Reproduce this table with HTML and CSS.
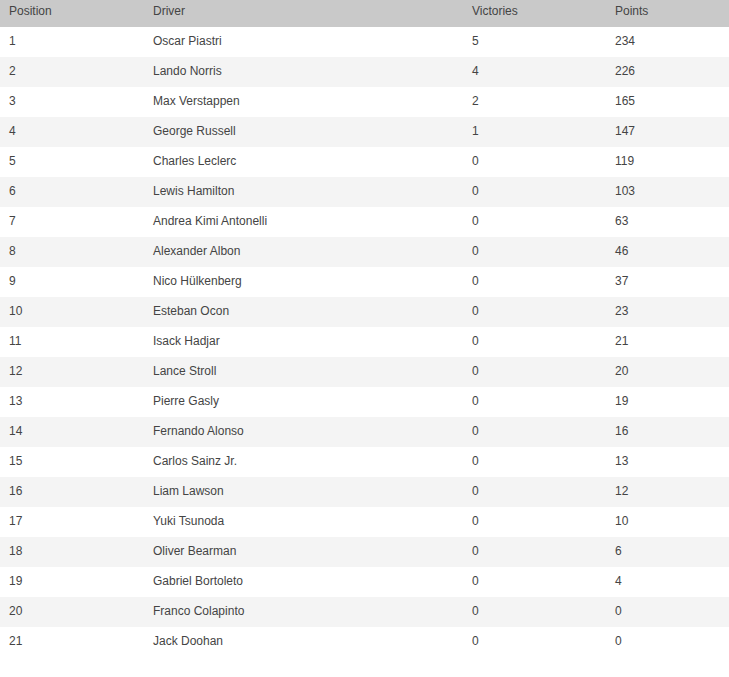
FILE: index.html
```html
<!DOCTYPE html>
<html>
<head>
<meta charset="utf-8">
<link rel="stylesheet" href="styles.css">
</head>
<body>
<table class="standings">
  <colgroup>
    <col class="c-pos"><col class="c-driver"><col class="c-wins"><col class="c-pts">
  </colgroup>
  <thead>
    <tr><th>Position</th><th>Driver</th><th>Victories</th><th>Points</th></tr>
  </thead>
  <tbody>
    <tr><td>1</td><td>Oscar Piastri</td><td>5</td><td>234</td></tr>
    <tr><td>2</td><td>Lando Norris</td><td>4</td><td>226</td></tr>
    <tr><td>3</td><td>Max Verstappen</td><td>2</td><td>165</td></tr>
    <tr><td>4</td><td>George Russell</td><td>1</td><td>147</td></tr>
    <tr><td>5</td><td>Charles Leclerc</td><td>0</td><td>119</td></tr>
    <tr><td>6</td><td>Lewis Hamilton</td><td>0</td><td>103</td></tr>
    <tr><td>7</td><td>Andrea Kimi Antonelli</td><td>0</td><td>63</td></tr>
    <tr><td>8</td><td>Alexander Albon</td><td>0</td><td>46</td></tr>
    <tr><td>9</td><td>Nico Hülkenberg</td><td>0</td><td>37</td></tr>
    <tr><td>10</td><td>Esteban Ocon</td><td>0</td><td>23</td></tr>
    <tr><td>11</td><td>Isack Hadjar</td><td>0</td><td>21</td></tr>
    <tr><td>12</td><td>Lance Stroll</td><td>0</td><td>20</td></tr>
    <tr><td>13</td><td>Pierre Gasly</td><td>0</td><td>19</td></tr>
    <tr><td>14</td><td>Fernando Alonso</td><td>0</td><td>16</td></tr>
    <tr><td>15</td><td>Carlos Sainz Jr.</td><td>0</td><td>13</td></tr>
    <tr><td>16</td><td>Liam Lawson</td><td>0</td><td>12</td></tr>
    <tr><td>17</td><td>Yuki Tsunoda</td><td>0</td><td>10</td></tr>
    <tr><td>18</td><td>Oliver Bearman</td><td>0</td><td>6</td></tr>
    <tr><td>19</td><td>Gabriel Bortoleto</td><td>0</td><td>4</td></tr>
    <tr><td>20</td><td>Franco Colapinto</td><td>0</td><td>0</td></tr>
    <tr><td>21</td><td>Jack Doohan</td><td>0</td><td>0</td></tr>
  </tbody>
</table>
</body>
</html>
```

FILE: styles.css
```css
html, body {
  margin: 0;
  padding: 0;
  background: #ffffff;
}
body {
  font-family: "Liberation Sans", Arial, sans-serif;
  font-size: 12px;
  color: #444444;
}
.standings {
  width: 729px;
  border-collapse: collapse;
  table-layout: fixed;
}
.c-pos { width: 144px; }
.c-driver { width: 319px; }
.c-wins { width: 143px; }
.c-pts { width: 123px; }
.standings th {
  background: #c9c9c9;
  color: #444444;
  font-weight: normal;
  text-align: left;
  height: 27px;
  padding: 0 0 6px 9px;
  box-sizing: border-box;
  vertical-align: middle;
}
.standings td {
  height: 30px;
  padding: 0 0 2px 9px;
  box-sizing: border-box;
  vertical-align: middle;
}
.standings tbody tr:nth-child(even) td {
  background: #f4f4f4;
}
```
